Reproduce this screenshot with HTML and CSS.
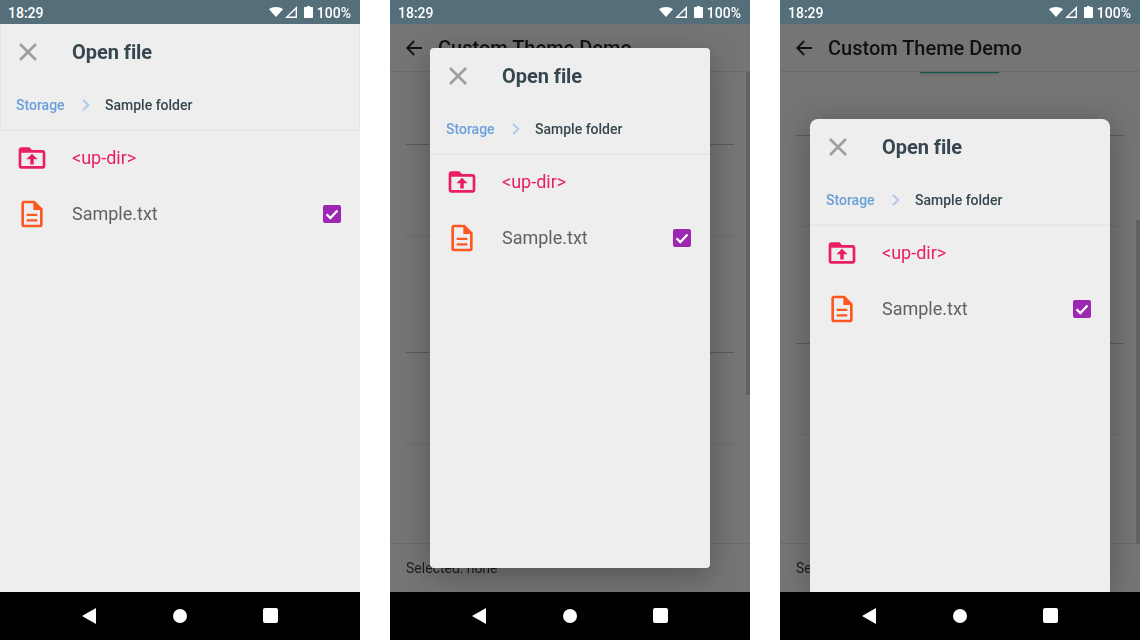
FILE: index.html
```html
<!DOCTYPE html>
<html lang="en">
<head>
<meta charset="utf-8">
<title>Open file</title>
<link rel="stylesheet" href="styles.css">
</head>
<body>
<svg class="defs" width="0" height="0" aria-hidden="true">
  <symbol id="wifi" viewBox="0 0 14 10"><path d="M7 10 0 2.200C1.800.8 4.200 0 7 0s5.200.8 7 2.200z"/></symbol>
  <symbol id="signal" viewBox="0 0 12 12"><path fill-rule="evenodd" d="M12 0v12H0zM10.600 3.400 3.400 10.600h7.200z"/></symbol>
  <symbol id="battery" viewBox="0 0 9 12"><path d="M3 0h3v1h2c.6 0 1 .4 1 1v9c0 .6-.4 1-1 1H1c-.6 0-1-.4-1-1V2c0-.6.4-1 1-1h2z"/></symbol>
  <symbol id="close" viewBox="0 0 18 18"><path d="M1 1l16 16M17 1 1 17" fill="none" stroke="currentColor" stroke-width="2.600"/></symbol>
  <symbol id="chevron" viewBox="0 0 8 12"><path d="M1 .8 6.400 6 1 11.200" fill="none" stroke="currentColor" stroke-width="1.800"/></symbol>
  <symbol id="folder" viewBox="0 0 24 24"><path fill-rule="evenodd" d="M10 4H4C2.900 4 2 4.900 2 6v12c0 1.100.9 2 2 2h16c1.100 0 2-.9 2-2V8c0-1.100-.9-2-2-2h-8zM4 8h16v10H4z"/><path d="M12 8.800 7.800 13h2.900v3.800h2.600V13h2.900z"/></symbol>
  <symbol id="file" viewBox="0 0 24 24"><path fill-rule="evenodd" d="M14 2H6C4.900 2 4 2.900 4 4v16c0 1.100.9 2 2 2h12c1.100 0 2-.9 2-2V8zM6 4h7v5h5v11H6z"/><path d="M8 11.800h8v1.700H8zM8 16h8v1.700H8z"/></symbol>
  <symbol id="check" viewBox="0 0 18 18"><path d="M3.500 9.300 7.300 13 14.500 5.500" fill="none" stroke="#fff" stroke-width="2.300"/></symbol>
  <symbol id="arrow" viewBox="0 0 16 16"><path d="M16 8H1.500M8.200 1 1.200 8l7 7" fill="none" stroke="currentColor" stroke-width="1.800"/></symbol>
  <symbol id="nav-back" viewBox="0 0 14 16"><path d="M14 0v16L0 8z"/></symbol>
</svg>

<main class="gallery">
  <section class="phone">
    <header class="status">
      <span class="time">18:29</span>
      <span class="status-icons">
        <svg class="i-wifi"><use href="#wifi"/></svg>
        <svg class="i-signal"><use href="#signal"/></svg>
        <svg class="i-battery"><use href="#battery"/></svg>
        <span class="pct">100%</span>
      </span>
    </header>
    <div class="screen">
      <div class="chooser chooser-full">
        <div class="chooser-title">
          <svg class="i-close"><use href="#close"/></svg>
          <h2>Open file</h2>
        </div>
        <div class="crumbs">
          <span class="crumb-root">Storage</span>
          <svg class="i-chevron"><use href="#chevron"/></svg>
          <span class="crumb-current">Sample folder</span>
        </div>
        <ul class="files">
          <li class="file-row up"><svg class="i-file"><use href="#folder"/></svg><span>&lt;up-dir&gt;</span></li>
          <li class="file-row doc"><svg class="i-file"><use href="#file"/></svg><span>Sample.txt</span><span class="box"><svg class="i-check"><use href="#check"/></svg></span></li>
        </ul>
      </div>
    </div>
    <nav class="navbar">
      <svg class="i-navback"><use href="#nav-back"/></svg>
      <span class="nav-home"></span>
      <span class="nav-recent"></span>
    </nav>
  </section>

  <section class="phone">
    <header class="status">
      <span class="time">18:29</span>
      <span class="status-icons">
        <svg class="i-wifi"><use href="#wifi"/></svg>
        <svg class="i-signal"><use href="#signal"/></svg>
        <svg class="i-battery"><use href="#battery"/></svg>
        <span class="pct">100%</span>
      </span>
    </header>
    <div class="screen demo">
      <div class="appbar">
        <svg class="i-arrow"><use href="#arrow"/></svg>
        <h1>Custom Theme Demo</h1>
      </div>
      <div class="demo-list">
        <div class="demo-line l-first"></div>
        <div class="demo-line l-faint l-short"></div>
        <div class="demo-line l-tall"></div>
        <div class="demo-line l-faint l-short"></div>
      </div>
      <div class="demo-footer">Selected: none</div>
      <span class="scrollbar scroll-top"></span>
      <div class="chooser chooser-center">
        <div class="chooser-title">
          <svg class="i-close"><use href="#close"/></svg>
          <h2>Open file</h2>
        </div>
        <div class="crumbs">
          <span class="crumb-root">Storage</span>
          <svg class="i-chevron"><use href="#chevron"/></svg>
          <span class="crumb-current">Sample folder</span>
        </div>
        <ul class="files">
          <li class="file-row up"><svg class="i-file"><use href="#folder"/></svg><span>&lt;up-dir&gt;</span></li>
          <li class="file-row doc"><svg class="i-file"><use href="#file"/></svg><span>Sample.txt</span><span class="box"><svg class="i-check"><use href="#check"/></svg></span></li>
        </ul>
      </div>
    </div>
    <nav class="navbar">
      <svg class="i-navback"><use href="#nav-back"/></svg>
      <span class="nav-home"></span>
      <span class="nav-recent"></span>
    </nav>
  </section>

  <section class="phone">
    <header class="status">
      <span class="time">18:29</span>
      <span class="status-icons">
        <svg class="i-wifi"><use href="#wifi"/></svg>
        <svg class="i-signal"><use href="#signal"/></svg>
        <svg class="i-battery"><use href="#battery"/></svg>
        <span class="pct">100%</span>
      </span>
    </header>
    <div class="screen demo">
      <div class="appbar">
        <svg class="i-arrow"><use href="#arrow"/></svg>
        <h1>Custom Theme Demo</h1>
      </div>
      <div class="demo-list">
        <span class="teal"></span>
        <div class="demo-line l-first-scrolled"></div>
        <div class="demo-line l-faint l-short"></div>
        <div class="demo-line l-tall"></div>
        <div class="demo-line l-faint l-short"></div>
      </div>
      <div class="demo-footer">Selected: none</div>
      <span class="scrollbar scroll-bottom"></span>
      <div class="chooser chooser-bottom">
        <div class="chooser-title">
          <svg class="i-close"><use href="#close"/></svg>
          <h2>Open file</h2>
        </div>
        <div class="crumbs">
          <span class="crumb-root">Storage</span>
          <svg class="i-chevron"><use href="#chevron"/></svg>
          <span class="crumb-current">Sample folder</span>
        </div>
        <ul class="files">
          <li class="file-row up"><svg class="i-file"><use href="#folder"/></svg><span>&lt;up-dir&gt;</span></li>
          <li class="file-row doc"><svg class="i-file"><use href="#file"/></svg><span>Sample.txt</span><span class="box"><svg class="i-check"><use href="#check"/></svg></span></li>
        </ul>
      </div>
    </div>
    <nav class="navbar">
      <svg class="i-navback"><use href="#nav-back"/></svg>
      <span class="nav-home"></span>
      <span class="nav-recent"></span>
    </nav>
  </section>
</main>
</body>
</html>
```

FILE: styles.css
```css
* { box-sizing: border-box; }
html, body { margin: 0; padding: 0; }
body { background: #fff; font-family: Roboto, "Liberation Sans", sans-serif; overflow: hidden; }
.defs { position: absolute; }
svg { display: block; fill: currentColor; }

.gallery { display: flex; gap: 30px; width: 1140px; height: 640px; filter: blur(.3px); }
.phone { display: flex; flex-direction: column; width: 360px; height: 640px; flex: none; }

.status {
  display: flex; align-items: center; justify-content: space-between;
  height: 24px; flex: none; padding: 1px 9px 0 8px;
  background: #546e7a; color: #fff; font-size: 14px; font-weight: 500;
}
.status-icons { display: flex; align-items: center; }
.i-wifi { width: 14px; height: 10px; margin-right: 2px; margin-top: -1px; }
.i-signal { width: 12px; height: 12px; margin-right: 7px; margin-top: -1px; }
.i-battery { width: 9px; height: 12px; margin-right: 4px; margin-top: -1px; }

.screen { position: relative; flex: 1; min-height: 0; overflow: hidden; display: flex; flex-direction: column; background: #eeeeee; }
.demo { background: #757575; }

.appbar { display: flex; align-items: center; height: 48px; flex: none; padding-left: 16px; border-bottom: 1px solid #6a6a6a; color: #111; }
.i-arrow { width: 16px; height: 16px; margin-right: 16px; }
.appbar h1 { margin: 0; font-size: 20px; font-weight: 500; }

.demo-list { flex: 1; position: relative; padding: 0 16px; }
.demo-line { border-bottom: 1px solid #5a5a5a; }
.l-first { height: 73px; }
.l-first-scrolled { height: 64px; }
.l-short { height: 91px; }
.l-tall { height: 117px; }
.l-faint { border-bottom-color: #6c6c6c; }
.teal { position: absolute; top: 0; left: 140px; width: 79px; height: 1px; background: #0a5a50; box-shadow: 0 1px 3px rgba(0,0,0,.3); }

.demo-footer { height: 49px; flex: none; padding: 0 16px; display: flex; align-items: center; border-top: 1px solid #6a6a6a; font-size: 14px; color: #1c1c1c; }

.scrollbar { position: absolute; right: 0; width: 4px; background: #626262; }
.scroll-top { top: 48px; height: 323px; }
.scroll-bottom { top: 196px; height: 323px; }

.chooser { background: #eeeeee; display: flex; flex-direction: column; }
.chooser-full { flex: 1; }
.chooser-full .chooser-title, .chooser-full .crumbs { box-shadow: inset 1px 0 #e6e6e6, inset -1px 0 #e6e6e6; }
.chooser-center {
  position: absolute; top: 24px; left: 40px; width: 280px; height: 520px; border-radius: 4px;
  box-shadow: 0 8px 30px rgba(0,0,0,.28);
}
.chooser-bottom {
  position: absolute; top: 95px; left: 30px; width: 300px; bottom: 0; border-radius: 8px 8px 0 0;
  box-shadow: 0 4px 30px rgba(0,0,0,.28);
}

.chooser-title { display: flex; align-items: center; height: 56px; flex: none; padding-left: 19px; color: #9e9e9e; }
.i-close { width: 18px; height: 18px; margin-right: 35px; }
.chooser-title h2 { margin: 0; font-size: 20px; font-weight: 700; color: #37474f; letter-spacing: -.05px; }

.crumbs { display: flex; align-items: center; height: 51px; flex: none; padding: 0 16px 0; border-bottom: 2px solid #e6e6e6; font-size: 14px; }
.crumb-root { color: #6a9fd8; width: 66px; font-weight: 500; }
.i-chevron { width: 8px; height: 12px; color: #aac8ea; margin-right: 15px; }
.crumb-current { color: #37474f; font-weight: 500; }

.files { list-style: none; margin: -1px 0 0; padding: 0; }
.file-row { position: relative; display: flex; align-items: center; height: 56px; padding: 0 19px 0 16px; font-size: 18px; }
.up span { margin-top: -1px; }
.doc span:not(.box) { margin-top: -2px; }
.i-file { width: 32px; height: 32px; margin-right: 24px; flex: none; }
.up { color: #e91e63; }
.doc { color: #616161; }
.doc .i-file { color: #ff5722; }
.box { margin-left: auto; width: 18px; height: 18px; background: #9c27b0; border-radius: 2px; }
.i-check { width: 18px; height: 18px; }

.navbar { position: relative; display: flex; align-items: center; justify-content: center; height: 48px; flex: none; background: #000; color: #fff; }
.i-navback { width: 14px; height: 16px; position: absolute; left: 82px; top: 16px; }
.nav-home { width: 14px; height: 14px; border-radius: 50%; background: #fff; }
.nav-recent { position: absolute; left: 263px; top: 16px; width: 15px; height: 15px; background: #fff; border-radius: 2px; }
```
